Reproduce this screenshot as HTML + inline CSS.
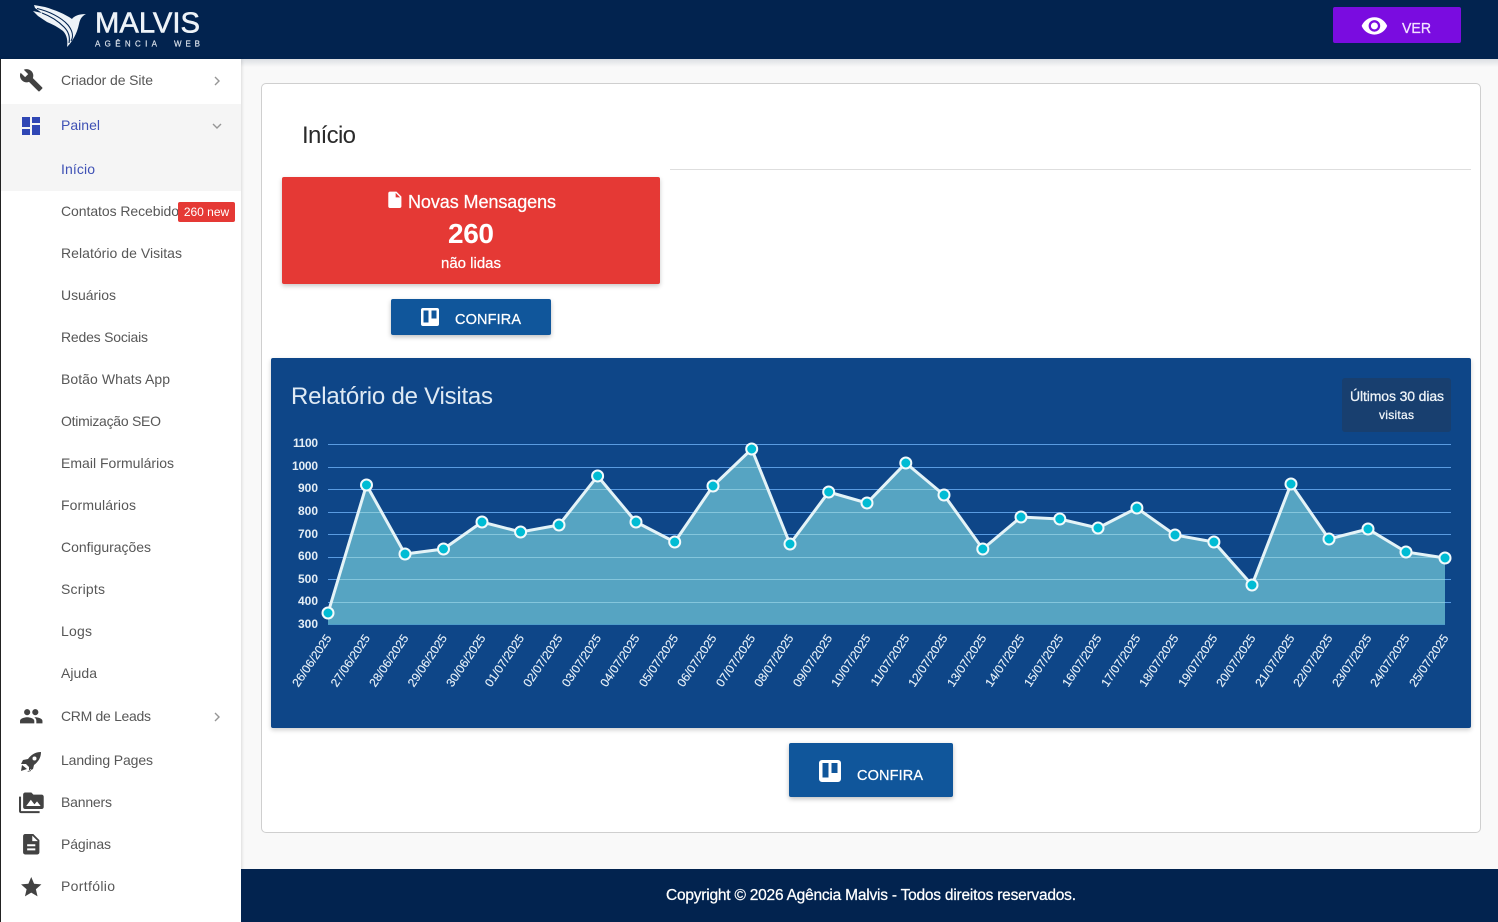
<!DOCTYPE html>
<html lang="pt-BR"><head><meta charset="utf-8"><title>Início</title>
<style>
html,body{margin:0;padding:0;width:1498px;height:922px;overflow:hidden;background:#f9f9f9}
.b{position:absolute;box-sizing:border-box}
svg#s{position:absolute;left:0;top:0;z-index:5}
svg text{font-family:"Liberation Sans",sans-serif}
.m{fill:#575757;font-size:14px}
.a{fill:#3f51b5;font-size:14px}
.ic{fill:#424242}
.w{stroke:#fff;stroke-width:.25px}
</style></head><body>
<div class="b" style="left:0;top:59px;width:1498px;height:8px;background:linear-gradient(#dcdfe3,#f9f9f9)"></div>
<div class="b" style="left:0;top:0;width:1498px;height:59px;background:#02234f"></div>
<div class="b" style="left:0;top:59px;width:241px;height:863px;background:#fff;border-left:1px solid #222;box-shadow:1px 0 3px rgba(0,0,0,.12)"></div>
<div class="b" style="left:1px;top:104px;width:240px;height:87px;background:#f5f5f5"></div>
<div class="b" style="left:178px;top:202px;width:57px;height:20px;background:#e53935;border-radius:2px;z-index:6"></div>
<div class="b" style="left:1333px;top:7px;width:128px;height:36px;background:#7a0ce0;border-radius:2px"></div>
<div class="b" style="left:261px;top:83px;width:1220px;height:750px;background:#fff;border:1px solid #cfcfcf;border-radius:5px"></div>
<div class="b" style="left:670px;top:169px;width:801px;height:1px;background:#dedede"></div>
<div class="b" style="left:282px;top:177px;width:378px;height:107px;background:#e53935;border-radius:2px;box-shadow:0 2px 5px rgba(0,0,0,.22)"></div>
<div class="b" style="left:391px;top:299px;width:160px;height:36px;background:#10569b;border-radius:2px;box-shadow:0 2px 5px rgba(0,0,0,.25)"></div>
<div class="b" style="left:271px;top:358px;width:1200px;height:370px;background:#0e4688;border-radius:2px;box-shadow:0 2px 5px rgba(0,0,0,.2)"></div>
<div class="b" style="left:1342px;top:378px;width:109px;height:54px;background:#183f6f;border-radius:3px"></div>
<div class="b" style="left:789px;top:743px;width:164px;height:54px;background:#10569b;border-radius:2px;box-shadow:0 2px 5px rgba(0,0,0,.25)"></div>
<div class="b" style="left:241px;top:869px;width:1257px;height:53px;background:#02234f"></div>

<svg id="s" width="1498" height="922" viewBox="0 0 1498 922" xmlns="http://www.w3.org/2000/svg">
<defs><clipPath id="ac"><path d="M328 613L366.500 485L405 554L443.500 549L482 522L520.600 532L559 525L597.600 476L636 522L674.700 542L713 486L751.700 449L790 544L828.700 492L867 503L905.800 463L944 495L982.800 549L1021 517L1059.800 519L1098 528L1136.900 508L1175 535L1213.900 542L1252 585L1291 484L1329 539L1368 529L1406 552L1445 558V624.500H328Z"/></clipPath></defs>
<!-- logo -->
<g>
<path fill="#eef3f8" d="M34 5L45 7C55 10 65 14 72 19C74 16 79 14 86 14C82 16 80 19 79 24C77 34 72 42 67 47C68 41 67 35 63 31C58 27 52 24 47 22L38 16L33 11L42 13L35 8Z"/>
<path fill="none" stroke="#02234f" stroke-width="1.100" d="M37 8.500C48 11 61 17 68 25C72 30 74 36 71 41M42 13C50 16 58 21 64 27C69 32 70 38 69 43"/>
<text x="95" y="32.500" font-size="29" fill="#eef3f8" stroke="#eef3f8" stroke-width=".55" textLength="105" lengthAdjust="spacingAndGlyphs">MALVIS</text>
<text x="95" y="46.500" font-size="8" fill="#dfe6ef" stroke="#dfe6ef" stroke-width=".15" textLength="62">AGÊNCIA</text>
<text x="174" y="46.500" font-size="8" fill="#dfe6ef" stroke="#dfe6ef" stroke-width=".15" textLength="26">WEB</text>
</g>
<!-- top button -->
<path fill="#fff" transform="translate(1360.500,12) scale(1.160)" d="M12 4.500C7 4.500 2.730 7.610 1 12c1.730 4.390 6 7.500 11 7.500s9.270-3.110 11-7.500c-1.730-4.390-6-7.500-11-7.500zM12 17c-2.760 0-5-2.240-5-5s2.240-5 5-5 5 2.240 5 5-2.240 5-5 5zm0-8c-1.660 0-3 1.340-3 3s1.340 3 3 3 3-1.340 3-3-1.340-3-3-3z"/>
<text x="1402" y="33" font-size="15" fill="#f3e3ff" stroke="#f3e3ff" stroke-width=".3" textLength="29" lengthAdjust="spacingAndGlyphs">VER</text>

<!-- sidebar icons -->
<path class="ic" transform="translate(19,68) scale(1.020)" d="M22.700 19l-9.100-9.100c.9-2.300.4-5-1.500-6.900-2-2-5-2.400-7.400-1.300L9 6 6 9 1.600 4.700C.4 7.100.9 10.100 2.900 12.100c1.900 1.900 4.600 2.400 6.900 1.500l9.100 9.100c.4.4 1 .4 1.400 0l2.300-2.300c.5-.4.5-1.100.1-1.400z"/>
<path fill="#2f46b4" transform="translate(19,114)" d="M3 13h8V3H3v10zm0 8h8v-6H3v6zm10 0h8V11h-8v10zm0-18v6h8V3h-8z"/>
<path class="ic" transform="translate(19,704) scale(1.020)" d="M16 11c1.660 0 2.990-1.340 2.990-3S17.660 5 16 5c-1.660 0-3 1.340-3 3s1.340 3 3 3zm-8 0c1.660 0 2.990-1.340 2.990-3S9.660 5 8 5C6.340 5 5 6.340 5 8s1.340 3 3 3zm0 2c-2.330 0-7 1.170-7 3.500V19h14v-2.500c0-2.330-4.670-3.500-7-3.500zm8 0c-.29 0-.62.02-.97.05 1.160.84 1.970 1.970 1.970 3.450V19h6v-2.500c0-2.330-4.670-3.500-7-3.500z"/>
<path class="ic" d="M41 752C35 752 31 755 28 759L23 760L21 764L26 764L29 767L29 771L33 769L34 765C38 762 41 758 41 752ZM21 771L22 765L27 769ZM27 772L31 769L31 771Z"/>
<circle cx="34.500" cy="758.500" r="2" fill="#fff"/>
<path class="ic" transform="translate(19,790.500) scale(1.030)" d="M2 6H0v5h.01L0 20c0 1.100.9 2 2 2h18v-2H2V6zm20-2h-8l-2-2H6c-1.100 0-1.990.9-1.990 2L4 16c0 1.100.9 2 2 2h16c1.100 0 2-.9 2-2V6c0-1.100-.9-2-2-2zM7 15l4.500-6 3.500 4.510 2.500-3.010L21 15H7z"/>
<path class="ic" transform="translate(19,832) scale(1.020)" d="M14 2H6c-1.100 0-1.990.9-1.990 2L4 20c0 1.100.89 2 1.990 2H18c1.100 0 2-.9 2-2V8l-6-6zm2 16H8v-2h8v2zm0-4H8v-2h8v2zm-3-5V3.500L18.500 9H13z"/>
<path class="ic" transform="translate(19,875) scale(1.020)" d="M12 17.270L18.180 21l-1.640-7.030L22 9.240l-7.190-.61L12 2 9.190 8.630 2 9.240l5.460 4.730L5.820 21z"/>
<g fill="none" stroke="#969696" stroke-width="1.400">
<path d="M215 77l4 4-4 4"/><path d="M213 124l4 4 4-4"/><path d="M215 713l4 4-4 4"/>
</g>

<!-- sidebar text -->
<text class="m" x="61" y="85" textLength="92">Criador de Site</text>
<text class="a" x="61" y="130" textLength="39">Painel</text>
<text class="a" x="61" y="174" textLength="34">Início</text>
<text class="m" x="61" y="216" textLength="125">Contatos Recebidos</text>
<text class="m" x="61" y="258" textLength="121">Relatório de Visitas</text>
<text class="m" x="61" y="300" textLength="55">Usuários</text>
<text class="m" x="61" y="342" textLength="87">Redes Sociais</text>
<text class="m" x="61" y="384" textLength="109">Botão Whats App</text>
<text class="m" x="61" y="426" textLength="100">Otimização SEO</text>
<text class="m" x="61" y="468" textLength="113">Email Formulários</text>
<text class="m" x="61" y="510" textLength="75">Formulários</text>
<text class="m" x="61" y="552" textLength="90">Configurações</text>
<text class="m" x="61" y="594" textLength="44">Scripts</text>
<text class="m" x="61" y="636" textLength="31">Logs</text>
<text class="m" x="61" y="678" textLength="36">Ajuda</text>
<text class="m" x="61" y="721" textLength="90">CRM de Leads</text>
<text class="m" x="61" y="765" textLength="92">Landing Pages</text>
<text class="m" x="61" y="807" textLength="51">Banners</text>
<text class="m" x="61" y="849" textLength="50">Páginas</text>
<text class="m" x="61" y="891" textLength="54">Portfólio</text>

<!-- content -->
<text x="302" y="143" font-size="24" fill="#2a2a2a" textLength="54">Início</text>
<path fill="#fff" transform="translate(385,190) scale(.82)" d="M6 2c-1.100 0-1.990.9-1.990 2L4 20c0 1.100.89 2 1.990 2H18c1.100 0 2-.9 2-2V8l-6-6H6zm7 7V3.500L18.500 9H13z"/>
<text class="w" x="408" y="208" font-size="18" fill="#fff" textLength="148">Novas Mensagens</text>
<text x="448" y="243" font-size="28" font-weight="700" fill="#fff" textLength="46">260</text>
<text class="w" x="441" y="268" font-size="15" fill="#fff" textLength="60">não lidas</text>
<path fill="#fff" fill-rule="evenodd" d="M423 308H437A2 2 0 0 1 439 310V324A2 2 0 0 1 437 326H423A2 2 0 0 1 421 324V310A2 2 0 0 1 423 308ZM423.500 310.500V322.500H428.500V310.500ZM431.500 310.500V318.500H436.500V310.500Z"/>
<text class="w" x="455" y="324" font-size="14.500" fill="#fff" textLength="66">CONFIRA</text>
<path fill="#fff" fill-rule="evenodd" d="M822 760H838A3 3 0 0 1 841 763V779A3 3 0 0 1 838 782H822A3 3 0 0 1 819 779V763A3 3 0 0 1 822 760ZM822.500 763V777.500H828.500V763ZM831.500 763V773H837.500V763Z"/>
<text class="w" x="857" y="780" font-size="14.500" fill="#fff" textLength="66">CONFIRA</text>

<text x="291" y="404" font-size="24" fill="#dfeaf4" textLength="202">Relatório de Visitas</text>
<text class="w" x="1350" y="401" font-size="14" fill="#eaf2f8" textLength="94">Últimos 30 dias</text>
<text class="w" x="1379" y="419" font-size="12" fill="#eaf2f8" textLength="35">visitas</text>

<!-- chart -->
<path fill="#56a4c2" d="M328 613L366.500 485L405 554L443.500 549L482 522L520.600 532L559 525L597.600 476L636 522L674.700 542L713 486L751.700 449L790 544L828.700 492L867 503L905.800 463L944 495L982.800 549L1021 517L1059.800 519L1098 528L1136.900 508L1175 535L1213.900 542L1252 585L1291 484L1329 539L1368 529L1406 552L1445 558V624.500H328Z"/>
<path stroke="#5a9be0" stroke-width="1" d="M328 444.500H1451M328 467.500H1451M328 489.500H1451M328 512.500H1451M328 534.500H1451M328 557.500H1451M328 579.500H1451M328 602.500H1451"/>
<path clip-path="url(#ac)" stroke="#84c6dc" stroke-width="1" d="M328 444.500H1451M328 467.500H1451M328 489.500H1451M328 512.500H1451M328 534.500H1451M328 557.500H1451M328 579.500H1451M328 602.500H1451"/>
<path d="M328 624.500H1445" stroke="#4d9cc8" stroke-width="1"/>
<path fill="none" stroke="#e4f3f7" stroke-width="3" d="M328 613L366.500 485L405 554L443.500 549L482 522L520.600 532L559 525L597.600 476L636 522L674.700 542L713 486L751.700 449L790 544L828.700 492L867 503L905.800 463L944 495L982.800 549L1021 517L1059.800 519L1098 528L1136.900 508L1175 535L1213.900 542L1252 585L1291 484L1329 539L1368 529L1406 552L1445 558"/>
<g fill="#00bcd4" stroke="#f2fafc" stroke-width="2">
<circle cx="328" cy="613" r="5.500"/><circle cx="366.500" cy="485" r="5.500"/><circle cx="405" cy="554" r="5.500"/><circle cx="443.500" cy="549" r="5.500"/><circle cx="482" cy="522" r="5.500"/><circle cx="520.600" cy="532" r="5.500"/><circle cx="559" cy="525" r="5.500"/><circle cx="597.600" cy="476" r="5.500"/><circle cx="636" cy="522" r="5.500"/><circle cx="674.700" cy="542" r="5.500"/><circle cx="713" cy="486" r="5.500"/><circle cx="751.700" cy="449" r="5.500"/><circle cx="790" cy="544" r="5.500"/><circle cx="828.700" cy="492" r="5.500"/><circle cx="867" cy="503" r="5.500"/><circle cx="905.800" cy="463" r="5.500"/><circle cx="944" cy="495" r="5.500"/><circle cx="982.800" cy="549" r="5.500"/><circle cx="1021" cy="517" r="5.500"/><circle cx="1059.800" cy="519" r="5.500"/><circle cx="1098" cy="528" r="5.500"/><circle cx="1136.900" cy="508" r="5.500"/><circle cx="1175" cy="535" r="5.500"/><circle cx="1213.900" cy="542" r="5.500"/><circle cx="1252" cy="585" r="5.500"/><circle cx="1291" cy="484" r="5.500"/><circle cx="1329" cy="539" r="5.500"/><circle cx="1368" cy="529" r="5.500"/><circle cx="1406" cy="552" r="5.500"/><circle cx="1445" cy="558" r="5.500"/>
</g>
<g font-size="12" font-weight="700" fill="#e3edf5" text-anchor="end">
<text x="318" y="447" textLength="25">1100</text><text x="318" y="470" textLength="26">1000</text><text x="318" y="492">900</text><text x="318" y="515">800</text><text x="318" y="538">700</text><text x="318" y="560">600</text><text x="318" y="583">500</text><text x="318" y="605">400</text><text x="318" y="628">300</text>
</g>
<g font-size="12" fill="#e6f0f8" stroke="#e6f0f8" stroke-width=".15" text-anchor="end">
<text transform="translate(332,638) rotate(-56)">26/06/2025</text>
<text transform="translate(370.500,638) rotate(-56)">27/06/2025</text>
<text transform="translate(409,638) rotate(-56)">28/06/2025</text>
<text transform="translate(447.500,638) rotate(-56)">29/06/2025</text>
<text transform="translate(486,638) rotate(-56)">30/06/2025</text>
<text transform="translate(524.600,638) rotate(-56)">01/07/2025</text>
<text transform="translate(563,638) rotate(-56)">02/07/2025</text>
<text transform="translate(601.600,638) rotate(-56)">03/07/2025</text>
<text transform="translate(640,638) rotate(-56)">04/07/2025</text>
<text transform="translate(678.700,638) rotate(-56)">05/07/2025</text>
<text transform="translate(717,638) rotate(-56)">06/07/2025</text>
<text transform="translate(755.700,638) rotate(-56)">07/07/2025</text>
<text transform="translate(794,638) rotate(-56)">08/07/2025</text>
<text transform="translate(832.700,638) rotate(-56)">09/07/2025</text>
<text transform="translate(871,638) rotate(-56)">10/07/2025</text>
<text transform="translate(909.800,638) rotate(-56)">11/07/2025</text>
<text transform="translate(948,638) rotate(-56)">12/07/2025</text>
<text transform="translate(986.800,638) rotate(-56)">13/07/2025</text>
<text transform="translate(1025,638) rotate(-56)">14/07/2025</text>
<text transform="translate(1063.800,638) rotate(-56)">15/07/2025</text>
<text transform="translate(1102,638) rotate(-56)">16/07/2025</text>
<text transform="translate(1140.900,638) rotate(-56)">17/07/2025</text>
<text transform="translate(1179,638) rotate(-56)">18/07/2025</text>
<text transform="translate(1217.900,638) rotate(-56)">19/07/2025</text>
<text transform="translate(1256,638) rotate(-56)">20/07/2025</text>
<text transform="translate(1295,638) rotate(-56)">21/07/2025</text>
<text transform="translate(1333,638) rotate(-56)">22/07/2025</text>
<text transform="translate(1372,638) rotate(-56)">23/07/2025</text>
<text transform="translate(1410,638) rotate(-56)">24/07/2025</text>
<text transform="translate(1449,638) rotate(-56)">25/07/2025</text>
</g>
<text class="w" x="666" y="900" font-size="15.500" fill="#fff" textLength="410">Copyright © 2026 Agência Malvis - Todos direitos reservados.</text>
</svg>
<div class="b" style="left:178px;top:202px;width:57px;height:20px;text-align:center;color:#fff;font:12px/20px 'Liberation Sans',sans-serif;z-index:7">260 new</div>
</body></html>
